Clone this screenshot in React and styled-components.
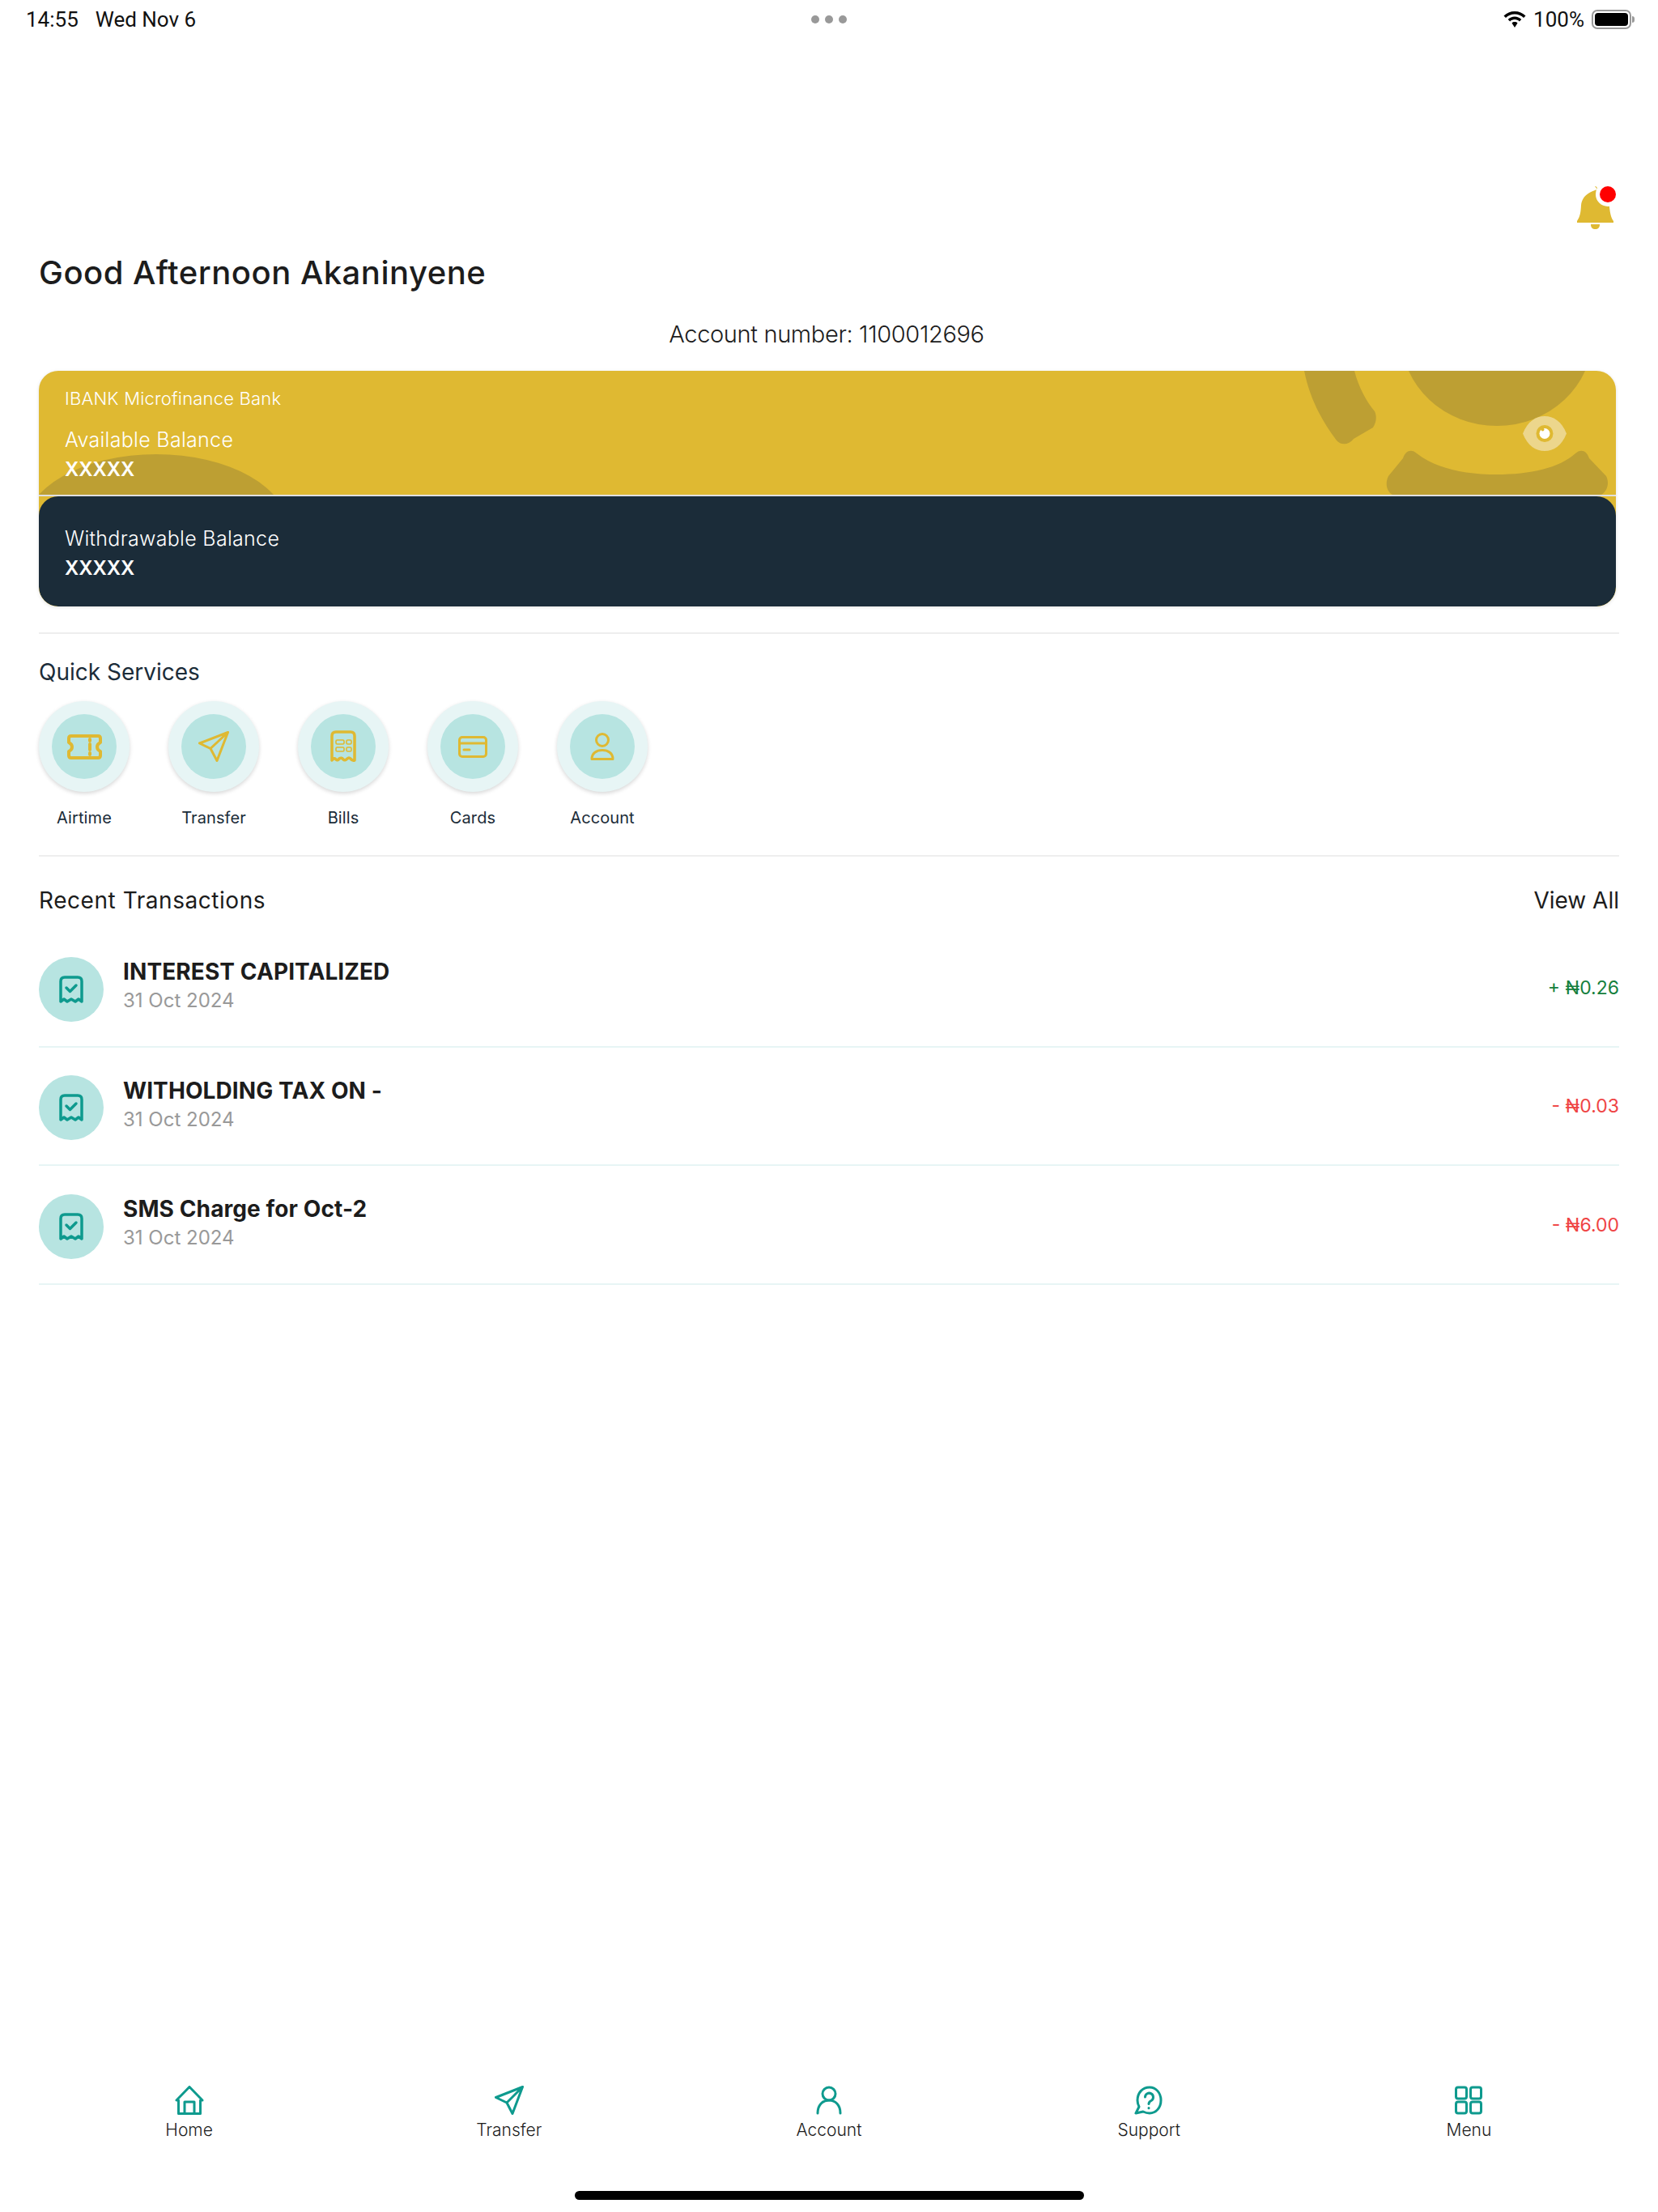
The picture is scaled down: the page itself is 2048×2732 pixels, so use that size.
import styled, { createGlobalStyle } from "styled-components";

const GOLD = "#dfb932";
const TEAL = "#0e9a8e";

const GlobalStyle = createGlobalStyle`
  html, body {
    margin: 0;
    padding: 0;
    background: #fff;
  }
  * {
    box-sizing: border-box;
  }
  body {
    font-family: "Inter", "Liberation Sans", sans-serif;
    color: #1c1c1c;
  }
`;

const Page = styled.div`
  width: 2048px;
  height: 2732px;
  display: flex;
  flex-direction: column;
  overflow: hidden;
`;

const StatusBar = styled.div`
  height: 48px;
  padding: 0 33px 0 32px;
  display: grid;
  grid-template-columns: 1fr auto 1fr;
  align-items: center;
  font-family: "Roboto", sans-serif;
  font-size: 26px;
  color: #111;
`;

const StatusLeft = styled.div`
  display: flex;
  gap: 21px;
`;

const Dots = styled.div`
  display: flex;
  gap: 7px;

  span {
    width: 10px;
    height: 10px;
    border-radius: 50%;
    background: #999;
  }
`;

const StatusRight = styled.div`
  display: flex;
  justify-content: flex-end;
  align-items: center;
  gap: 9px;
`;

const Battery = styled.div`
  width: 49px;
  height: 24px;
  border: 2px solid #999;
  border-radius: 7px;
  padding: 2px;
  position: relative;

  i {
    display: block;
    width: 100%;
    height: 100%;
    background: #000;
    border-radius: 4px;
  }

  &::after {
    content: "";
    position: absolute;
    right: -6px;
    top: 6px;
    width: 3px;
    height: 8px;
    background: #999;
    border-radius: 0 3px 3px 0;
  }
`;

const Content = styled.main`
  padding: 0 48px;
  flex: 1;
`;

const BellRow = styled.div`
  margin-top: 182px;
  height: 53px;
  padding-right: 4px;
  display: flex;
  justify-content: flex-end;
`;

const Greeting = styled.h1`
  margin: 30px 0 0;
  font-size: 40px;
  line-height: 48px;
  font-weight: 500;
  letter-spacing: 0.5px;
  color: #1c1c1c;
`;

const AccountNumber = styled.p`
  margin: 34px 0 0;
  padding-right: 6px;
  font-size: 29px;
  line-height: 36px;
  font-weight: 300;
  letter-spacing: -0.35px;
  text-align: center;
  color: #1c1c1c;
`;

const BalanceCard = styled.section`
  margin-top: 27px;
  width: 1948px;
  height: 291px;
  border-radius: 24px;
  background: ${GOLD};
  box-shadow: 0 1px 4px rgba(0, 0, 0, 0.12);
  position: relative;
  overflow: hidden;
  display: flex;
  flex-direction: column;
`;

const CardArt = styled.svg`
  position: absolute;
  left: 0;
  top: 0;
`;

const EyeButton = styled.svg`
  position: absolute;
  right: 61px;
  top: 56px;
`;

const CardTop = styled.div`
  height: 153px;
  padding: 22px 32px 0;
  position: relative;
  color: #fff;
`;

const CardDivider = styled.div`
  height: 2px;
  background: #e0e0e0;
  position: relative;
`;

const CardBottom = styled.div`
  flex: 1;
  background: #1b2c39;
  border-radius: 24px;
  padding: 38px 32px 0;
  color: #fff;
  position: relative;
`;

const BankName = styled.div`
  position: relative;
  font-size: 22px;
  line-height: 24px;
  font-weight: 300;
  letter-spacing: 0.2px;
  margin-bottom: 25px;
`;

const BalanceLabel = styled.div`
  position: relative;
  font-size: 25px;
  line-height: 28px;
  font-weight: 300;
  letter-spacing: 0.3px;
`;

const BalanceValue = styled.div`
  position: relative;
  font-size: 24px;
  line-height: 32px;
  font-weight: 600;
  margin-top: 7px;
`;

const Divider = styled.hr`
  border: 0;
  height: 2px;
  width: 1952px;
  background: #eeeeee;
  margin: ${(p) => p.$top}px 0 0;
`;

const SectionTitle = styled.h2`
  margin: 0;
  font-size: 28px;
  line-height: 36px;
  font-weight: 400;
  letter-spacing: ${(p) => p.$spacing || 0}px;
  color: ${(p) => p.$color || "#1c1c1c"};
`;

const ServicesTitle = styled(SectionTitle)`
  margin-top: 29px;
`;

const Services = styled.div`
  margin-top: 18px;
  display: flex;
  gap: 48px;
`;

const Service = styled.div`
  width: 112px;
  display: flex;
  flex-direction: column;
  align-items: center;
  gap: 18px;
`;

const ServiceRing = styled.div`
  width: 112px;
  height: 112px;
  border-radius: 50%;
  background: #e7f5f5;
  box-shadow: 0 2px 5px rgba(0, 0, 0, 0.16);
  display: flex;
  align-items: center;
  justify-content: center;
`;

const ServiceCircle = styled.div`
  width: 80px;
  height: 80px;
  border-radius: 50%;
  background: #b7e4e1;
  display: flex;
  align-items: center;
  justify-content: center;
`;

const ServiceLabel = styled.span`
  font-size: 20px;
  line-height: 28px;
  font-weight: 400;
  letter-spacing: 0.1px;
  color: #1b2c39;
  white-space: nowrap;
`;

const TxHeader = styled.div`
  margin-top: 36px;
  width: 1952px;
  display: flex;
  justify-content: space-between;
`;

const TxList = styled.div`
  margin-top: 17px;
  width: 1952px;
`;

const TxRow = styled.div`
  height: 146.5px;
  padding: 35px 0 30px;
  border-bottom: 2px solid #e7f5f5;
  display: flex;
  align-items: center;
  gap: 24px;
`;

const TxCircle = styled.div`
  width: 80px;
  height: 80px;
  border-radius: 50%;
  background: #b7e4e1;
  display: flex;
  align-items: center;
  justify-content: center;
  flex-shrink: 0;
`;

const TxText = styled.div`
  flex: 1;
  padding-bottom: 9px;
`;

const TxTitle = styled.div`
  font-size: 28px;
  line-height: 36px;
  font-weight: 700;
  letter-spacing: 0.1px;
  color: #1c1c1c;
`;

const TxDate = styled.div`
  font-size: 24px;
  line-height: 32px;
  margin-top: 2px;
  font-weight: 400;
  color: #999;
`;

const TxAmount = styled.div`
  font-size: 23px;
  font-weight: 400;
  padding-bottom: 4px;
  color: ${(p) => (p.$credit ? "#15803d" : "#ef4444")};
`;

const BottomNav = styled.nav`
  padding: 0 36px;
  display: grid;
  grid-template-columns: repeat(5, 1fr);
`;

const NavItem = styled.div`
  display: flex;
  flex-direction: column;
  align-items: center;
  gap: 5px;
`;

const NavLabel = styled.span`
  font-size: 21px;
  line-height: 28px;
  font-weight: 300;
  color: #1c1c1c;
  white-space: nowrap;
`;

const HomeIndicator = styled.div`
  width: 629px;
  height: 11px;
  margin: 61px auto 15px;
  background: #000;
  border-radius: 6px;
`;

const Ico = ({ w, h, color = GOLD, sw = 3, children }) => (
  <svg
    width={w}
    height={h}
    viewBox={`0 0 ${w} ${h}`}
    fill="none"
    stroke={color}
    strokeWidth={sw}
    strokeLinecap="round"
    strokeLinejoin="round"
  >
    {children}
  </svg>
);

const services = [
  {
    label: "Airtime",
    icon: (
      <Ico w={43} h={31} sw={4}>
        <path d="M5 2H38Q41 2 41 5V10Q37 12 37 15.5Q37 19 41 21V26Q41 29 38 29H5Q2 29 2 26V21Q6 19 6 15.5Q6 12 2 10V5Q2 2 5 2Z" />
        <path d="M28 6v2M28 12v7M28 23v2" />
      </Ico>
    ),
  },
  {
    label: "Transfer",
    icon: (
      <Ico w={38} h={38}>
        <path d="M36.5 1.5L1.5 15L15 21.5L23 36.5ZM36.5 1.5L15 21.5" />
      </Ico>
    ),
  },
  {
    label: "Bills",
    icon: (
      <Ico w={32} h={40} sw={3.5}>
        <path d="M2 37V7Q2 2 7 2H25Q30 2 30 7V37Q27 38 25 35Q23 33 21 35Q18 38 16 36Q14 33 11 35Q9 38 7 36Q5 33 2 37Z" />
        <rect x="7" y="12" width="10" height="5" rx="1.5" strokeWidth={1.6} />
        <rect x="7" y="21" width="10" height="5" rx="1.5" strokeWidth={1.6} />
        <rect x="20" y="12" width="6" height="5" rx="1.5" strokeWidth={1.6} />
        <rect x="20" y="21" width="6" height="5" rx="1.5" strokeWidth={1.6} />
      </Ico>
    ),
  },
  {
    label: "Cards",
    icon: (
      <Ico w={36} h={27}>
        <rect x="1.5" y="1.5" width="33" height="24" rx="3.5" />
        <path d="M2 9h32M7 17h7" />
      </Ico>
    ),
  },
  {
    label: "Account",
    icon: (
      <Ico w={30} h={34}>
        <ellipse cx="15" cy="9" rx="7.5" ry="7.5" />
        <path d="M2 32.5C2 25 8 21.5 15 21.5C22 21.5 28 25 28 32.5Z" />
      </Ico>
    ),
  },
];

const transactions = [
  { title: "INTEREST CAPITALIZED", amount: "+ ₦0.26", credit: true },
  { title: "WITHOLDING TAX ON -", amount: "- ₦0.03" },
  { title: "SMS Charge for Oct-2", amount: "- ₦6.00" },
];

const navItems = [
  {
    label: "Home",
    icon: (
      <Ico w={36} h={36} color={TEAL}>
        <path d="M18 1.5L2 18H4.5V34.5H31.5V18H34ZM12 34.5V20H24V34.5" />
      </Ico>
    ),
  },
  {
    label: "Transfer",
    icon: (
      <Ico w={36} h={36} color={TEAL}>
        <path d="M34.5 1.5L1.5 14.5L15 21L22 34.5ZM34.5 1.5L15 21" />
      </Ico>
    ),
  },
  {
    label: "Account",
    icon: (
      <Ico w={36} h={36} color={TEAL}>
        <ellipse cx="18" cy="10" rx="8" ry="8" />
        <path d="M4 34C4 24 10 18 18 18C26 18 32 24 32 34" />
      </Ico>
    ),
  },
  {
    label: "Support",
    icon: (
      <Ico w={36} h={36} color={TEAL}>
        <path d="M19 2C10 2 4 9 4 18C4 21 5 24 6 26L2 34L11 32C13 33 16 34 19 34C27 34 33 27 33 18C33 9 27 2 19 2Z" />
        <path d="M13.5 14a5 5 0 1 1 7.500 4.500c-2 1-3 2-3 4M18 27.500v.2" />
      </Ico>
    ),
  },
  {
    label: "Menu",
    icon: (
      <Ico w={36} h={36} color={TEAL}>
        <rect x="2.500" y="2" width="13" height="14" rx="2.500" />
        <rect x="20.500" y="2" width="13" height="14" rx="2.500" />
        <rect x="2.500" y="20" width="13" height="14" rx="2.500" />
        <rect x="20.500" y="20" width="13" height="14" rx="2.500" />
      </Ico>
    ),
  },
];

const ReceiptIcon = () => (
  <Ico w={30} h={34} color={TEAL} sw={3.5}>
    <path d="M2 32V7Q2 2 7 2H23Q28 2 28 7V32L24 29L20 32L15 29L10 32L6 29Z" />
    <path d="M9 15l4.500 4.500L21 12" />
  </Ico>
);

export default function App() {
  return (
    <Page>
      <GlobalStyle />
      <StatusBar>
        <StatusLeft>
          <span>14:55</span>
          <span>Wed Nov 6</span>
        </StatusLeft>
        <Dots>
          <span />
          <span />
          <span />
        </Dots>
        <StatusRight>
          <svg width="28" height="20" viewBox="0 0 28 20" fill="#000">
            <path d="M14 0C8.700 0 4 2 .5 5.500L3 8C5.900 5.200 9.800 3.500 14 3.500S22.100 5.200 25 8L27.500 5.500C24 2 19.300 0 14 0Z" />
            <path d="M14 6.500C10.800 6.500 7.900 7.800 5.700 9.900L8.200 12.400C9.700 11 11.700 10.100 14 10.100S18.300 11 19.800 12.400L22.300 9.900C20.100 7.800 17.200 6.500 14 6.500Z" />
            <path d="M14 13C12.600 13 11.400 13.500 10.500 14.400L14 20L17.500 14.400C16.600 13.500 15.400 13 14 13Z" />
          </svg>
          <span>100%</span>
          <Battery>
            <i />
          </Battery>
        </StatusRight>
      </StatusBar>

      <Content>
        <BellRow>
          <svg width="48" height="53" viewBox="0 0 48 53">
            <path
              fill={GOLD}
              d="M22 0C24 0 25 1.500 25 4C19 6 6 10 5 24C4.500 32 4 37 0 43V45H45V43C42 39 41 34 40 26V15C34 15 30 9 31 3C29 3 27 3 25 4Z"
            />
            <path fill={GOLD} d="M17 47H28C28 51 26 53 22.500 53C19 53 17 51 17 47Z" />
            <circle cx="38" cy="10" r="15" fill="#fff" />
            <circle cx="38" cy="10" r="10" fill="#f00" />
          </svg>
        </BellRow>

        <Greeting>Good Afternoon Akaninyene</Greeting>
        <AccountNumber>Account number: 1100012696</AccountNumber>

        <BalanceCard>
          <CardTop>
            <CardArt width="1948" height="153" viewBox="0 0 1948 153" fill="#bd9f33">
              <ellipse cx="145" cy="195" rx="163" ry="92" />
              <ellipse cx="1801" cy="-42" rx="118" ry="110" />
              <path d="M1563 0H1625C1630 20 1640 38 1650 50C1653 57 1652 63 1648 70L1624 84C1618 92 1608 92 1603 86C1585 62 1570 35 1563 0Z" />
              <path d="M1672 153C1664 148 1663 138 1667 130L1685 108C1688 98 1696 96 1702 102C1725 120 1760 128 1801 128C1842 128 1878 120 1898 102C1904 96 1912 98 1915 108L1936 130C1940 138 1938 148 1930 153Z" />
            </CardArt>
            <EyeButton width="54" height="43" viewBox="-27 -21.500 54 43">
              <path
                fill="#ecd68c"
                d="M-27 0C-21 -15 -11 -21.500 0 -21.500C11 -21.500 21 -15 27 0C21 15 11 21.500 0 21.500C-11 21.500 -21 15 -27 0Z"
              />
              <circle r="10.500" fill={GOLD} />
              <circle r="6.500" fill="#fff" />
              <circle cx="-2.500" cy="-5" r="2" fill={GOLD} />
            </EyeButton>
            <BankName>IBANK Microfinance Bank</BankName>
            <BalanceLabel>Available Balance</BalanceLabel>
            <BalanceValue>XXXXX</BalanceValue>
          </CardTop>
          <CardDivider />
          <CardBottom>
            <BalanceLabel>Withdrawable Balance</BalanceLabel>
            <BalanceValue>XXXXX</BalanceValue>
          </CardBottom>
        </BalanceCard>

        <Divider $top={32} />
        <ServicesTitle $color="#1b2c39">Quick Services</ServicesTitle>
        <Services>
          {services.map((s) => (
            <Service key={s.label}>
              <ServiceRing>
                <ServiceCircle>{s.icon}</ServiceCircle>
              </ServiceRing>
              <ServiceLabel>{s.label}</ServiceLabel>
            </Service>
          ))}
        </Services>
        <Divider $top={32} />

        <TxHeader>
          <SectionTitle $spacing={0.55}>Recent Transactions</SectionTitle>
          <SectionTitle>View All</SectionTitle>
        </TxHeader>
        <TxList>
          {transactions.map((t) => (
            <TxRow key={t.title}>
              <TxCircle>
                <ReceiptIcon />
              </TxCircle>
              <TxText>
                <TxTitle>{t.title}</TxTitle>
                <TxDate>31 Oct 2024</TxDate>
              </TxText>
              <TxAmount $credit={t.credit}>{t.amount}</TxAmount>
            </TxRow>
          ))}
        </TxList>
      </Content>

      <BottomNav>
        {navItems.map((n) => (
          <NavItem key={n.label}>
            {n.icon}
            <NavLabel>{n.label}</NavLabel>
          </NavItem>
        ))}
      </BottomNav>
      <HomeIndicator />
    </Page>
  );
}
